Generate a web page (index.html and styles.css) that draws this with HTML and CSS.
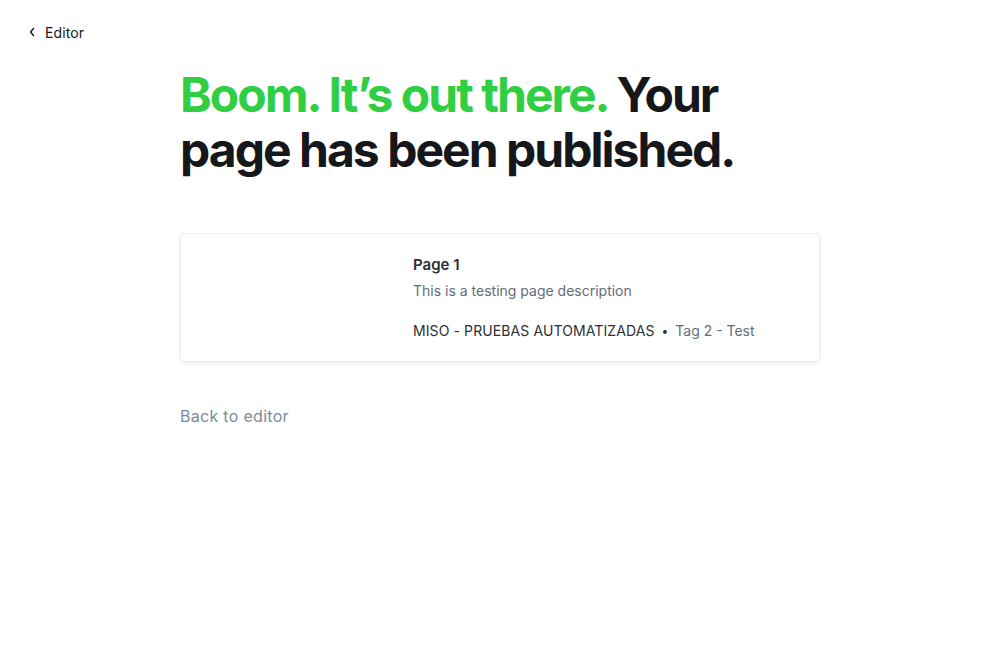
FILE: index.html
```html
<!DOCTYPE html>
<html>
<head>
<meta charset="utf-8">
<link rel="stylesheet" href="styles.css">
</head>
<body>
<header class="topbar">
  <a class="back-link" href="#">
    <svg class="chev" width="8" height="10" viewBox="0 0 8 10"><path d="M5.5 1.5 L2.5 5 L5.5 8.5" fill="none" stroke="#15171a" stroke-width="1.4" stroke-linecap="round" stroke-linejoin="round"/></svg>
    <span>Editor</span>
  </a>
</header>
<main class="content">
  <h1 class="headline"><span class="green">Boom. It’s out there.</span> Your page has been published.</h1>
  <div class="card">
    <div class="card-image"></div>
    <div class="card-body">
      <div class="card-title">Page 1</div>
      <div class="card-desc">This is a testing page description</div>
      <div class="card-meta"><span class="site">MISO - PRUEBAS AUTOMATIZADAS</span><span class="dot">•</span><span class="tag">Tag 2 - Test</span></div>
    </div>
  </div>
  <a class="back-editor" href="#">Back to editor</a>
</main>
</body>
</html>
```
FILE: styles.css
```css
* { box-sizing: border-box; }
html, body { margin: 0; padding: 0; background: #fff; }
body { font-family: Inter, "Noto Sans", sans-serif; color: #15171a; width: 1000px; height: 660px; overflow: hidden; }
a { text-decoration: none; color: inherit; }
.topbar { padding: 21px 28px 0; height: 58px; }
.back-link { display: inline-flex; align-items: center; gap: 9px; font-size: 14px; color: #15171a; letter-spacing: 0.1px; }
.chev { display: block; }
.content { width: 640px; margin: 0 auto; padding-top: 9px; }
.headline { margin: 0; font-size: 48px; line-height: 55px; font-weight: 700; letter-spacing: -0.041em; color: #15171a; }
.green { color: #30cf43; }
.card { margin-top: 56px; display: flex; border: 1px solid #ebeef0; border-radius: 3px; box-shadow: 0 2px 4px rgba(0,0,0,0.06); height: 129px; }
.card-image { width: 232px; flex-shrink: 0; }
.card-body { padding: 21px 20px 0 0; }
.card-title { font-size: 15px; font-weight: 600; line-height: 20px; color: #2b3035; }
.card-desc { margin-top: 6px; font-size: 14px; line-height: 20px; color: #626d79; }
.card-meta { margin-top: 20px; font-size: 14px; line-height: 20px; display: flex; align-items: center; }
.site { color: #2b3035; letter-spacing: 0.1px; }
.dot { margin: 0 7px; color: #2b3035; font-size: 12px; }
.tag { color: #626d79; }
.back-editor { display: inline-block; margin-top: 44px; font-size: 16px; color: #7c8b9a; letter-spacing: 0.3px; }
```
